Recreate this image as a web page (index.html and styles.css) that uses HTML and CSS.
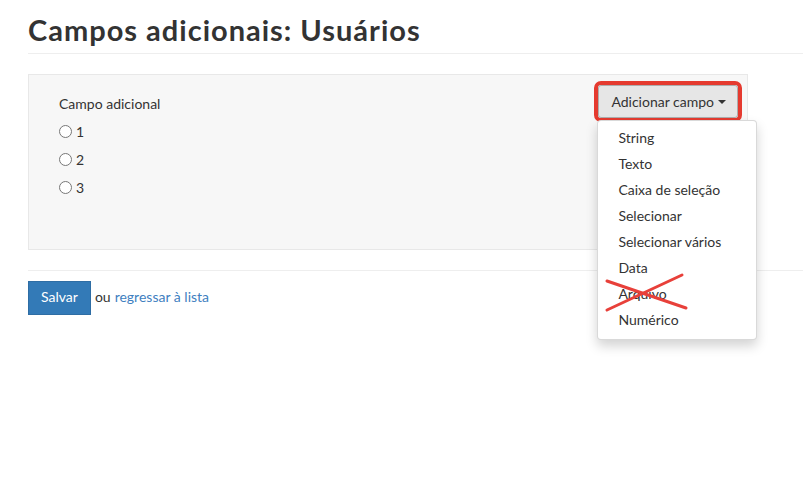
FILE: index.html
```html
<!DOCTYPE html>
<html lang="pt">
<head>
<meta charset="utf-8">
<title>Campos adicionais: Usuários</title>
<link rel="stylesheet" href="styles.css">
</head>
<body>
<div class="page">
  <h1 class="title">Campos adicionais: Usuários</h1>
  <div class="rule"></div>
  <div class="panel">
    <div class="fields">
      <div class="field-label">Campo adicional</div>
      <label class="radio-row"><input type="radio" name="campo"> 1</label>
      <label class="radio-row"><input type="radio" name="campo"> 2</label>
      <label class="radio-row"><input type="radio" name="campo"> 3</label>
    </div>
    <div class="dropdown">
      <div class="highlight">
        <button class="btn-dropdown" type="button">Adicionar campo <span class="caret"></span></button>
      </div>
      <div class="menu">
        <ul class="menu-list">
          <li>String</li>
          <li>Texto</li>
          <li>Caixa de seleção</li>
          <li>Selecionar</li>
          <li>Selecionar vários</li>
          <li>Data</li>
          <li>Arquivo</li>
          <li>Numérico</li>
        </ul>
        <svg class="cross" width="160" height="218" viewBox="0 0 160 218">
          <line x1="10" y1="161" x2="89" y2="188" />
          <line x1="10" y1="190" x2="85" y2="155" />
        </svg>
      </div>
    </div>
  </div>
  <div class="rule rule-bottom"></div>
  <div class="actions">
    <button class="btn-primary" type="button">Salvar</button>
    <span class="or">ou</span>
    <a class="link" href="#">regressar à lista</a>
  </div>
</div>
</body>
</html>
```
FILE: styles.css
```css
* { box-sizing: border-box; }
html, body {
  min-height: 480px;
}
body {
  margin: 0;
  font-family: "Lato", "Open Sans", sans-serif;
  font-size: 14px;
  color: #333;
  background: #fff;
}
.page {
  padding-left: 28px;
  min-height: 480px;
}
.title {
  margin: 0;
  padding-top: 14px;
  font-size: 29px;
  letter-spacing: 1px;
  font-weight: 700;
  line-height: 32px;
  color: #333;
}
.rule {
  margin-top: 7px;
  border-top: 1px solid #eee;
}
.panel {
  margin-top: 20px;
  width: 720px;
  height: 176px;
  background: #f7f7f7;
  border: 1px solid #e8e8e8;
  display: flex;
  justify-content: space-between;
  align-items: flex-start;
  padding: 6px 5px 0 30px;
}
.fields {
  padding-top: 13px;
}
.field-label {
  line-height: 20px;
  margin-bottom: 3px;
}
.radio-row {
  display: flex;
  align-items: center;
  height: 28px;
  gap: 4px;
}
.radio-row input {
  margin: 0;
  width: 13px;
  height: 13px;
}
.dropdown {
  position: relative;
}
.highlight {
  border: 4px solid #e53a2f;
  border-radius: 7px;
}
.btn-dropdown {
  display: flex;
  align-items: center;
  height: 33px;
  padding: 0 11px 0 12px;
  background: #e6e6e6;
  border: 1px solid #adadad;
  border-radius: 3px;
  font: inherit;
  color: #333;
}
.caret {
  display: inline-block;
  margin-left: 4px;
  width: 0;
  height: 0;
  border-top: 4px solid #333;
  border-left: 4px solid transparent;
  border-right: 4px solid transparent;
}
.menu {
  position: absolute;
  left: 3px;
  top: calc(100% - 2px);
  width: 160px;
  background: #fff;
  border: 1px solid rgba(0, 0, 0, 0.15);
  border-radius: 4px;
  box-shadow: 0 6px 12px rgba(0, 0, 0, 0.175);
  z-index: 10;
}
.menu-list {
  margin: 0;
  padding: 4px 0 6px;
  list-style: none;
}
.menu-list li {
  height: 26px;
  line-height: 26px;
  padding: 0 20px;
  color: #333;
  white-space: nowrap;
}
.cross {
  position: absolute;
  left: -1px;
  top: -1px;
  pointer-events: none;
}
.cross line {
  stroke: #e8403a;
  stroke-width: 3;
  stroke-linecap: round;
}
.rule-bottom {
  margin-top: 20px;
}
.actions {
  margin-top: 10px;
  display: flex;
  align-items: center;
  gap: 4px;
}
.btn-primary {
  height: 34px;
  padding: 0 12px 4px;
  background: #337ab7;
  border: 1px solid #2e6da4;
  border-radius: 0;
  color: #fff;
  font: inherit;
}
.or {
  padding-bottom: 4px;
}
.link {
  color: #3f7fbf;
  text-decoration: none;
  padding-bottom: 4px;
}
```
